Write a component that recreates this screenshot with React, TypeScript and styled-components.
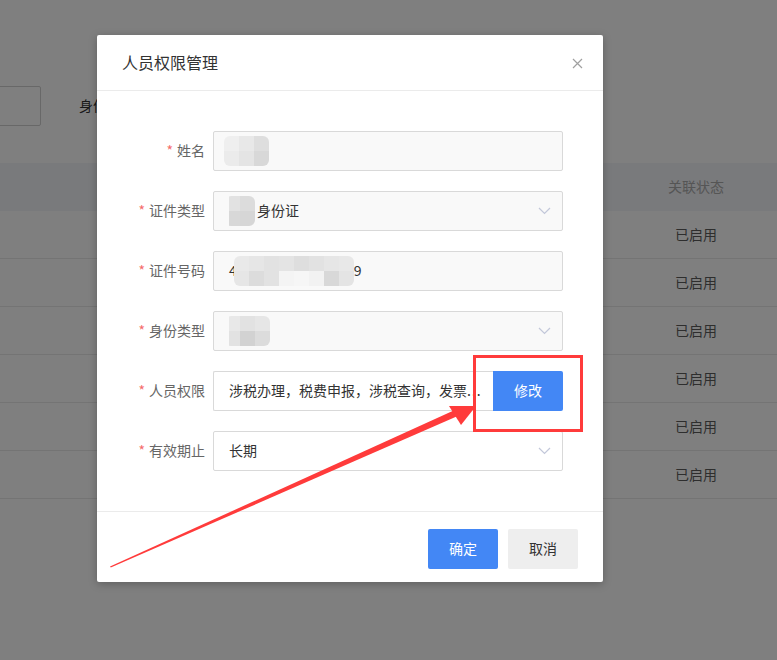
import React from "react";
import styled, { createGlobalStyle } from "styled-components";

const Global = createGlobalStyle`
  html, body { margin: 0; padding: 0; }
  body {
    font-family: "Noto Sans CJK SC", "Noto Sans", "Liberation Sans", sans-serif;
    font-size: 14px;
    color: #333;
    background: #fff;
  }
  * { box-sizing: border-box; }
`;

const Page = styled.div`
  position: relative;
  width: 777px;
  height: 660px;
  overflow: hidden;
  background: #fff;
`;

/* ---------- background page ---------- */
const SearchBar = styled.div`
  display: flex;
  align-items: center;
  padding-top: 86px;
  height: 126px;
`;

const SearchInput = styled.div`
  width: 120px;
  height: 40px;
  margin-left: -79px;
  border: 1px solid #d0d0d0;
  border-radius: 2px;
`;

const SearchLabel = styled.span`
  margin-left: 38px;
  padding-bottom: 2px;
  font-size: 14px;
  color: #333;
`;

const Table = styled.div`
  margin-top: 37px;
  width: 100%;
`;

const TRow = styled.div<{ $head?: boolean }>`
  display: grid;
  grid-template-columns: 615px 162px;
  height: 48px;
  align-items: center;
  background: ${(p) => (p.$head ? "#f3f5f9" : "#fff")};
  border-bottom: ${(p) => (p.$head ? "none" : "1px solid #e8e8e8")};
`;

const TCell = styled.div<{ $head?: boolean }>`
  text-align: center;
  font-size: 14px;
  padding-bottom: 2px;
  color: ${(p) => (p.$head ? "#aaa" : "#5c5c5c")};
`;

/* ---------- overlay & modal ---------- */
const Mask = styled.div`
  position: absolute;
  inset: 0;
  background: rgba(0, 0, 0, 0.5);
  display: flex;
  align-items: flex-start;
  padding: 35px 0 0 97px;
`;

const Modal = styled.div`
  width: 506px;
  background: #fff;
  border-radius: 2px;
  box-shadow: 0 2px 8px rgba(0, 0, 0, 0.25);
`;

const ModalHeader = styled.div`
  height: 56px;
  display: flex;
  align-items: center;
  justify-content: space-between;
  padding: 0 20px 0 25px;
  border-bottom: 1px solid #ebebeb;
`;

const Title = styled.div`
  font-size: 16px;
  color: #333;
  margin-top: -2px;
`;

const CloseBtn = styled.button`
  width: 12px;
  height: 12px;
  padding: 0;
  border: 0;
  background: none;
  display: flex;
  align-items: center;
  justify-content: center;
  margin-top: 2px;
  cursor: pointer;
`;

const Body = styled.div`
  padding: 40px 40px 40px 0;
  display: flex;
  flex-direction: column;
  gap: 20px;
`;

const FormRow = styled.div`
  display: grid;
  grid-template-columns: 108px 350px;
  column-gap: 8px;
  align-items: center;
`;

const Label = styled.label`
  text-align: right;
  font-size: 14px;
  color: #666;
  white-space: nowrap;
  padding-bottom: 2px;
`;

const Star = styled.span`
  color: #f56c6c;
  margin-right: 4px;
`;

const Field = styled.div<{ $disabled?: boolean }>`
  height: 40px;
  display: flex;
  align-items: center;
  padding: 0 15px 2px;
  border: 1px solid #d9d9d9;
  border-radius: 2px;
  background: ${(p) => (p.$disabled ? "#f9f9f9" : "#fff")};
  font-size: 14px;
  color: #333;
  white-space: nowrap;
  overflow: hidden;
`;

const FieldText = styled.span`
  flex: 1;
  display: flex;
  align-items: center;
  overflow: hidden;
`;

const Chevron = styled.svg`
  flex: none;
  margin-right: -4px;
  margin-top: 2px;
`;

const Group = styled.div`
  display: flex;
  height: 40px;
`;

const GroupField = styled(Field)`
  flex: 1;
  border-right: 0;
  border-radius: 2px 0 0 2px;
  padding-right: 2px;
`;

const Dots = styled.span`
  letter-spacing: 1px;
`;

const Button = styled.button<{ $variant?: "primary" | "default" }>`
  width: 70px;
  height: 40px;
  border: 0;
  border-radius: 2px;
  padding: 0 0 2px;
  font-family: inherit;
  font-size: 14px;
  cursor: pointer;
  background: ${(p) => (p.$variant === "primary" ? "#4387f5" : "#eeeeee")};
  color: ${(p) => (p.$variant === "primary" ? "#fff" : "#333")};
`;

const GroupButton = styled(Button)`
  border-radius: 0 2px 2px 0;
`;

const Footer = styled.div`
  border-top: 1px solid #ebebeb;
  padding: 17px 25px 13px;
  display: flex;
  justify-content: flex-end;
  gap: 10px;
`;

/* ---------- pixelated (mosaic) redaction ---------- */
const Mosaic = styled.span<{ $cols: number; $ml?: number; $mr?: number }>`
  display: inline-grid;
  grid-template-columns: repeat(${(p) => p.$cols}, 15px);
  grid-auto-rows: 15px;
  margin-left: ${(p) => p.$ml ?? 0}px;
  margin-right: ${(p) => p.$mr ?? 0}px;
  margin-top: 2px;
  border-radius: 6px;
  overflow: hidden;
  filter: blur(0.4px);
  flex: none;
`;

const Tile = styled.span`
  display: block;
`;

const MosaicBlock = ({
  cols,
  colors,
  ml,
  mr,
}: {
  cols: number;
  colors: string[];
  ml?: number;
  mr?: number;
}) => (
  <Mosaic $cols={cols} $ml={ml} $mr={mr}>
    {colors.map((c, i) => (
      <Tile key={i} style={{ background: c }} />
    ))}
  </Mosaic>
);

/* ---------- annotation ---------- */
const Annotation = styled.svg`
  position: absolute;
  left: 0;
  top: 0;
  pointer-events: none;
`;

const ChevronIcon = () => (
  <Chevron width="13" height="8" viewBox="0 0 13 8">
    <polyline points="1,1 6.5,6.5 12,1" fill="none" stroke="#c3c8da" strokeWidth="1.2" />
  </Chevron>
);

export default function App() {
  const rows = Array.from({ length: 6 });
  return (
    <Page>
      <Global />
      <SearchBar>
        <SearchInput />
        <SearchLabel>身份类型</SearchLabel>
      </SearchBar>
      <Table>
        <TRow $head>
          <div />
          <TCell $head>关联状态</TCell>
        </TRow>
        {rows.map((_, i) => (
          <TRow key={i}>
            <div />
            <TCell>已启用</TCell>
          </TRow>
        ))}
      </Table>

      <Mask>
        <Modal>
          <ModalHeader>
            <Title>人员权限管理</Title>
            <CloseBtn aria-label="close">
              <svg width="11" height="11" viewBox="0 0 11 11">
                <path d="M1 1 L10 10 M10 1 L1 10" stroke="#a0a0a0" strokeWidth="1.2" />
              </svg>
            </CloseBtn>
          </ModalHeader>
          <Body>
            <FormRow>
              <Label><Star>*</Star>姓名</Label>
              <Field $disabled>
                <MosaicBlock
                  cols={3}
                  ml={-5}
                  colors={["#efefef", "#e8e8e8", "#dedede", "#ebebeb", "#e4e4e4", "#d8d8d8"]}
                />
              </Field>
            </FormRow>
            <FormRow>
              <Label><Star>*</Star>证件类型</Label>
              <Field $disabled>
                <FieldText>
                  <MosaicBlock cols={2} ml={-4} mr={2} colors={["#e2e2e2", "#dcdcdc", "#d8d8d8", "#d6d6d6"]} />
                  身份证
                </FieldText>
                <ChevronIcon />
              </Field>
            </FormRow>
            <FormRow>
              <Label><Star>*</Star>证件号码</Label>
              <Field $disabled>
                4
                <MosaicBlock
                  cols={8}
                  ml={-3}
                  colors={[
                    "#e9e9e9", "#e6e6e6", "#e2e2e2", "#e4e4e4", "#dedede", "#e2e2e2", "#e6e6e6", "#e8e8e8",
                    "#e6e6e6", "#dcdcdc", "#e2e2e2", "#f4f4f4", "#f6f6f6", "#f2f2f2", "#d8d8d8", "#e4e4e4",
                  ]}
                />
                9
              </Field>
            </FormRow>
            <FormRow>
              <Label><Star>*</Star>身份类型</Label>
              <Field $disabled>
                <FieldText>
                  <MosaicBlock
                    cols={3}
                    ml={-4}
                    colors={["#e8e8e8", "#e2e2e2", "#e6e6e6", "#e2e2e2", "#d2d2d2", "#dcdcdc"]}
                  />
                </FieldText>
                <ChevronIcon />
              </Field>
            </FormRow>
            <FormRow>
              <Label><Star>*</Star>人员权限</Label>
              <Group>
                <GroupField>
                  <FieldText>
                    涉税办理，税费申报，涉税查询，发票<Dots>...</Dots>
                  </FieldText>
                </GroupField>
                <GroupButton $variant="primary">修改</GroupButton>
              </Group>
            </FormRow>
            <FormRow>
              <Label><Star>*</Star>有效期止</Label>
              <Field>
                <FieldText>长期</FieldText>
                <ChevronIcon />
              </Field>
            </FormRow>
          </Body>
          <Footer>
            <Button $variant="primary">确定</Button>
            <Button>取消</Button>
          </Footer>
        </Modal>
      </Mask>

      <Annotation width="777" height="660" viewBox="0 0 777 660">
        <rect x="474.5" y="356.5" width="107" height="74" fill="none" stroke="#ff3b3b" strokeWidth="3" />
        <polygon points="110,566.5 110.8,567.6 460,415 457,409" fill="#ff3b3b" />
        <polygon points="476,406 449,406 461,425" fill="#ff3b3b" />
      </Annotation>
    </Page>
  );
}
